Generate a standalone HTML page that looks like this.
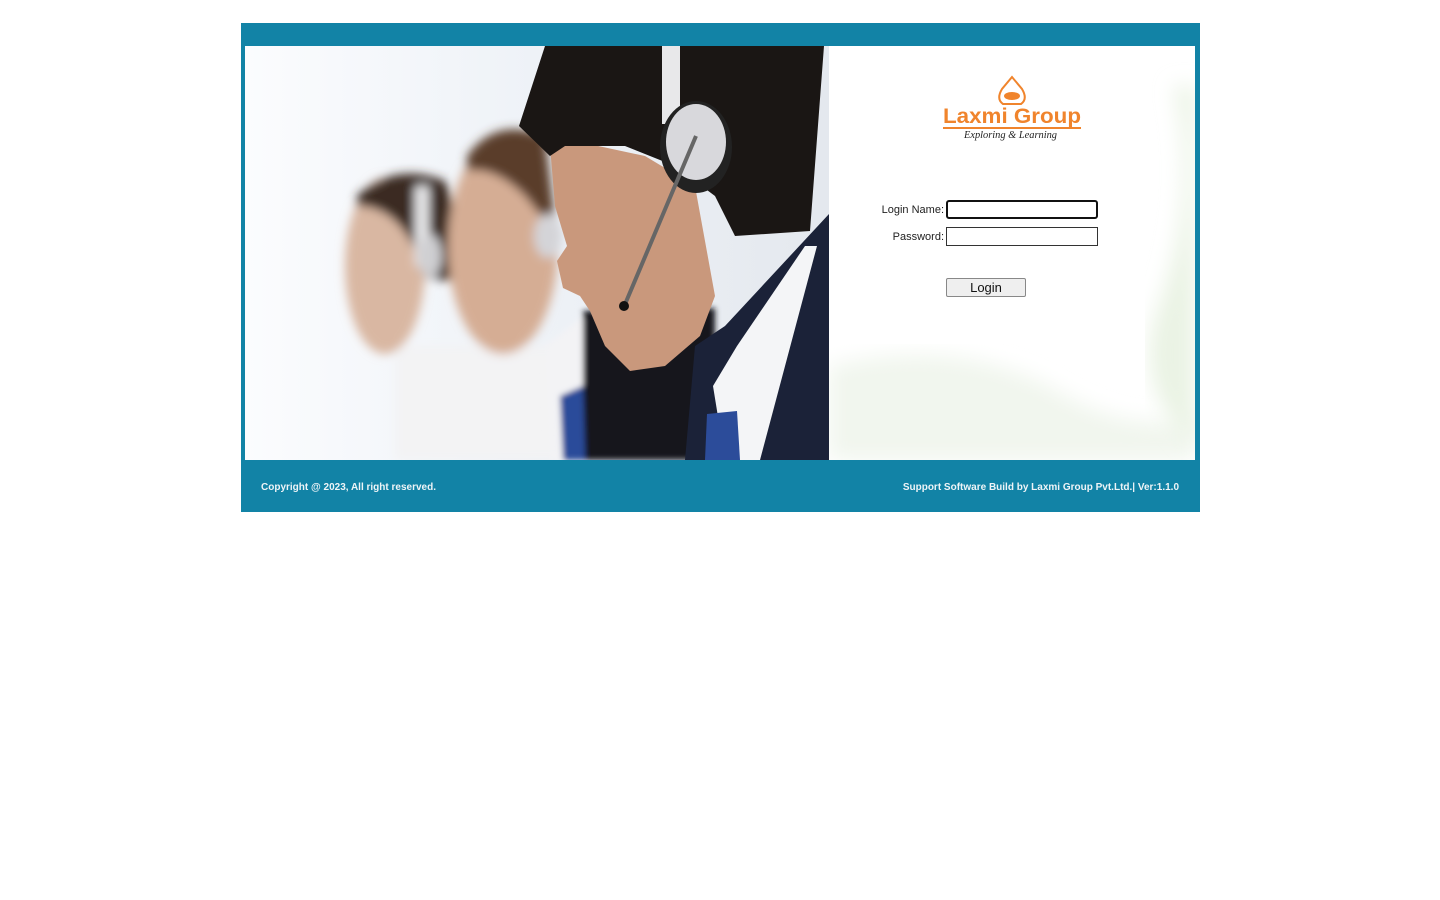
<!DOCTYPE html>
<html><head><meta charset="utf-8"><style>
body{margin:0;background:#fff;font-family:"Liberation Sans",Arial,sans-serif;}
#frame{position:absolute;left:241px;top:23px;width:959px;height:489px;background:#1283a6;}
#inner{position:absolute;left:4px;top:23px;width:950px;height:414px;background:#fff;overflow:hidden;}
#photo{position:absolute;left:0;top:0;width:584px;height:414px;}
#right{position:absolute;left:584px;top:0;width:366px;height:414px;}
.lbl{position:absolute;font-size:11px;color:#222;text-align:right;width:120px;}
.inp{position:absolute;left:701px;width:152px;height:19px;border:1px solid #333;background:#fff;box-sizing:border-box;}
#btn{position:absolute;left:701px;top:232px;width:80px;height:19px;border:1px solid #888;border-radius:2px;background:#efefef;font-size:13px;text-align:center;line-height:17px;box-sizing:border-box;color:#111}
.ft{position:absolute;top:459px;font-size:10px;font-weight:bold;color:#eef4f7;}
</style></head><body>
<div id="frame">
<div id="inner">
<svg id="photo" viewBox="0 0 584 414" width="584" height="414">
<defs>
<linearGradient id="bg" x1="0" x2="1" y1="0" y2="0"><stop offset="0" stop-color="#fbfcfe"/><stop offset="0.5" stop-color="#eef2f7"/><stop offset="1" stop-color="#e4e8ee"/></linearGradient>
<filter id="b3"><feGaussianBlur stdDeviation="5"/></filter>
<filter id="b2"><feGaussianBlur stdDeviation="3"/></filter>
</defs>
<rect width="584" height="414" fill="url(#bg)"/>
<g filter="url(#b3)">
<path d="M150 300 L340 300 L340 414 L150 414Z" fill="#f3f3f4"/>
<ellipse cx="140" cy="220" rx="40" ry="88" fill="#d9b7a2"/>
<path d="M112 150 Q150 115 200 135 Q215 170 208 235 L180 232 Q160 160 112 160Z" fill="#3b2a22"/>
<rect x="170" y="140" width="14" height="80" fill="#e8e8ea"/>
<ellipse cx="185" cy="210" rx="12" ry="22" fill="#cfcfd2"/>
<ellipse cx="258" cy="200" rx="55" ry="108" fill="#d5ad94"/>
<path d="M222 110 Q250 70 300 90 L312 190 L280 150 Q250 120 222 125Z" fill="#5a3c2a"/>
<ellipse cx="303" cy="190" rx="14" ry="22" fill="#d4d4d8"/>
</g>
<g filter="url(#b2)">
<path d="M300 300 L345 265 L345 414 L305 414Z" fill="#f3f3f5"/>
<path d="M338 265 L470 262 L470 414 L338 414Z" fill="#17171c"/>
<path d="M315 350 L338 340 L340 414 L318 414Z" fill="#2c4c9a"/>
</g>
<path d="M440 414 L450 300 L480 280 L584 168 L584 414Z" fill="#1b2238"/>
<path d="M468 340 L492 300 L560 200 L572 200 L515 414 L480 414Z" fill="#f4f5f7"/>
<path d="M462 368 L492 365 L495 414 L460 414Z" fill="#2c4c9a"/>
<path d="M305 100 L330 95 L400 110 L450 140 L470 250 L455 290 L420 320 L385 325 L360 300 L345 265 L335 250 L318 242 L312 215 L322 200 L310 160Z" fill="#c9987c"/>
<path d="M274 80 L300 0 L579 0 L565 185 L490 190 L470 150 L430 120 L380 100 L320 100 L305 110Z" fill="#1a1614"/>
<rect x="417" y="0" width="18" height="78" fill="#e8e8ea"/>
<ellipse cx="451" cy="101" rx="36" ry="46" fill="#222"/>
<ellipse cx="451" cy="96" rx="30" ry="38" fill="#d8d8dc"/>
<line x1="451" y1="90" x2="378" y2="263" stroke="#666" stroke-width="4"/>
<circle cx="379" cy="260" r="5" fill="#111"/>
</svg>
<svg id="right" viewBox="0 0 366 414" width="366" height="414">
<defs><filter id="bb"><feGaussianBlur stdDeviation="10"/></filter></defs>
<rect width="366" height="414" fill="#fff"/>
<path d="M0 320 Q120 290 220 340 Q300 390 366 370 L366 414 L0 414Z" fill="#f1f6ee" filter="url(#bb)"/>
<path d="M345 40 Q370 150 330 260 Q300 340 366 400 L366 40Z" fill="#eaf3e4" filter="url(#bb)"/>
<path d="M183 31 L173 43 Q167 53 174 58 L192 58 Q199 53 193 43Z" fill="none" stroke="#f0842c" stroke-width="2"/>
<ellipse cx="183" cy="50" rx="8" ry="4" fill="#f0842c"/>
<text x="114" y="77" font-family="'Liberation Sans',sans-serif" font-weight="bold" font-size="21" fill="#f0842c" textLength="138" lengthAdjust="spacingAndGlyphs">Laxmi Group</text>
<rect x="114" y="81" width="138" height="2" fill="#f0842c"/>
<text x="135" y="92" font-family="'Liberation Serif',serif" font-style="italic" font-size="10" fill="#222" textLength="93" lengthAdjust="spacingAndGlyphs">Exploring &amp; Learning</text>
</svg>
<div class="lbl" style="left:579px;top:158px">Login Name:</div>
<div class="inp" style="top:154px;border:2px solid #111;border-radius:3px"></div>
<div class="lbl" style="left:579px;top:185px">Password:</div>
<div class="inp" style="top:181px"></div>
<div id="btn">Login</div>
</div>
<div class="ft" style="left:20px">Copyright @ 2023, All right reserved.</div>
<div class="ft" style="right:21px">Support Software Build by Laxmi Group Pvt.Ltd.| Ver:1.1.0</div>
</div>
</body></html>
